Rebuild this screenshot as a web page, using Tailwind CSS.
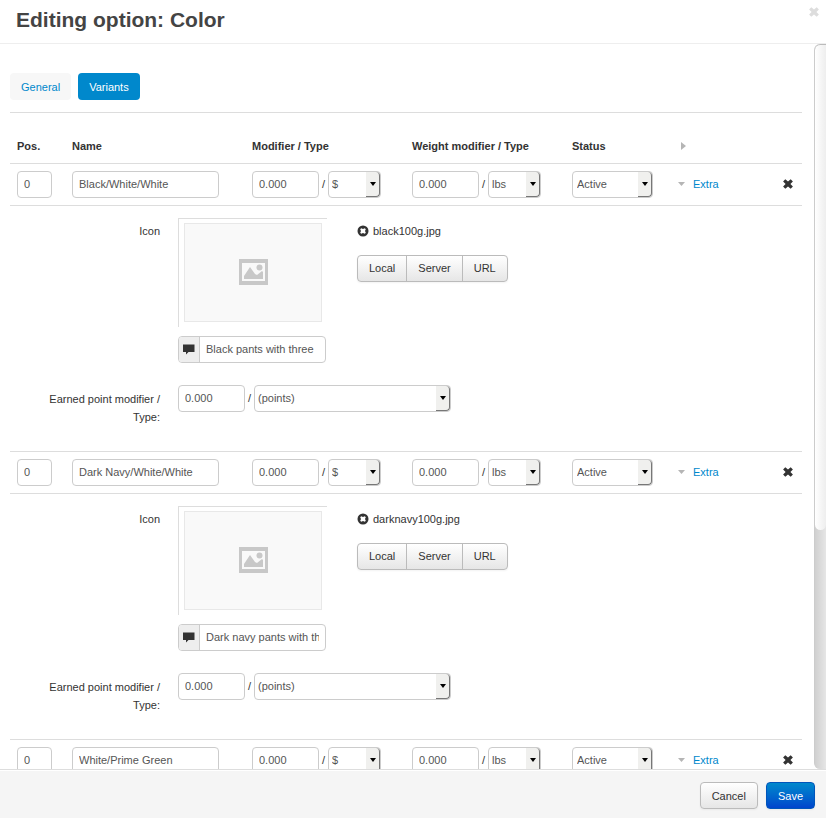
<!DOCTYPE html>
<html lang="en">
<head>
<meta charset="utf-8">
<title>Editing option: Color</title>
<script src="https://cdn.jsdelivr.net/npm/@tailwindcss/browser@4"></script>
</head>
<body class="flex h-screen flex-col overflow-hidden bg-white font-['Liberation_Sans',Arial,sans-serif] text-[11px] leading-[18px] text-[#333]">

<svg class="hidden" aria-hidden="true">
  <symbol id="cross" viewBox="0 0 10 10"><path fill="currentColor" d="M2.3 0.3 5 2.6 7.7 0.3 9.9 2.5 7.4 5 9.9 7.5 7.7 9.7 5 7.4 2.3 9.7 0.1 7.5 2.6 5 0.1 2.5z"/></symbol>
  <symbol id="picture" viewBox="0 0 29 26"><path fill="#c8c8c8" fill-rule="evenodd" d="M0 0h29v26H0zM3 4v18h23V4z"/><path fill="#c8c8c8" d="M5 20v-3l6-9 5 7 2 1 5-4 1 1v7z"/><circle cx="20.500" cy="8.500" r="3" fill="#c8c8c8"/></symbol>
  <symbol id="comment" viewBox="0 0 12 11"><path fill="#333" d="M0 .5h11.500v7.500H5.500L3 10.500V8H0z"/></symbol>
  <symbol id="remove" viewBox="0 0 12 12"><circle cx="6" cy="6" r="5.500" fill="#333"/><path fill="#fff" d="M4.200 3.200 6 4 7.800 3.200 8.800 4.200 8 6 8.800 7.800 7.800 8.800 6 8 4.200 8.800 3.200 7.800 4 6 3.200 4.200z"/></symbol>
  <symbol id="down" viewBox="0 0 6 4"><path fill="#000" d="M0 0h6L3 4z"/></symbol>
</svg>

<header class="flex h-11 shrink-0 items-start justify-between border-b border-[#eee] pl-4 pr-[7px]">
  <h1 class="pt-1 text-[21px] font-bold leading-8 text-[#444]">Editing option: Color</h1>
  <button type="button" aria-label="Close" class="mt-[7px] text-[#ddd]"><svg class="size-[10px]"><use href="#cross"/></svg></button>
</header>

<div class="flex min-h-0 flex-1">
  <main class="min-w-0 flex-1 overflow-y-auto pl-[10px] pr-3 pt-[29px] [scrollbar-width:none]">
    <nav class="flex gap-[7px] border-b border-[#ddd] pb-3">
      <a href="#general" class="rounded bg-[#f7f7f7] px-[11px] pb-1 pt-[5px] text-[#08c]">General</a>
      <a href="#variants" class="rounded bg-[#08c] px-[11px] pb-1 pt-[5px] text-white">Variants</a>
    </nav>

    <table class="mt-4 w-full table-fixed border-collapse">
      <colgroup><col class="w-[55px]"><col class="w-[180px]"><col class="w-[160px]"><col class="w-[160px]"><col class="w-[105px]"><col><col class="w-9"></colgroup>
      <thead>
        <tr class="h-[34px] text-left text-[#333]">
          <th class="px-[7px]">Pos.</th><th class="px-[7px]">Name</th><th class="px-[7px]">Modifier / Type</th><th class="px-[7px]">Weight modifier / Type</th><th class="px-[7px]">Status</th>
          <th class="pl-[11px]"><button type="button" aria-label="Expand all" class="block"><svg class="h-2 w-[5px]" viewBox="0 0 5 8"><path fill="#b5b5b5" d="M0 0 5 4 0 8z"/></svg></button></th><th></th>
        </tr>
      </thead>
      <tbody id="variants"></tbody>
    </table>
  </main>
  <div class="w-3 shrink-0 overflow-hidden rounded-l-md border-l border-[#ccc] bg-linear-to-r from-[#d0d0d0] to-[#e6e6e6]" aria-hidden="true">
    <div class="h-[67%] w-full rounded-l-md rounded-b-md border-t border-[#bbb] bg-linear-to-r from-white to-[#eee]"></div>
  </div>
</div>

<footer class="flex shrink-0 justify-end gap-2 border-t border-[#ddd] bg-[#f5f5f5] pb-[9px] pr-[11px] pt-3 shadow-[inset_0_1px_0_#fff]">
  <button type="button" class="h-[27px] rounded border border-[#bbb] bg-linear-to-b from-white to-[#e6e6e6] px-[11px] shadow-xs">Cancel</button>
  <button type="button" class="h-[27px] rounded border border-[#0055bb] bg-linear-to-b from-[#08c] to-[#04c] px-[11px] text-white shadow-xs">Save</button>
</footer>

<template id="variant">
  <tr class="h-[42px] border-t border-[#ddd]">
    <td class="px-[7px]"><input aria-label="Position" value="0" class="block h-[27px] w-[35px] rounded border border-[#ccc] px-[6px] text-[#555]"></td>
    <td class="px-[7px]"><input data-name aria-label="Name" class="block h-[27px] w-[147px] rounded border border-[#ccc] px-[6px] text-[#555]"></td>
    <td class="px-[7px]"><div class="flex items-center">
      <input aria-label="Modifier" value="0.000" class="h-[27px] w-[67px] rounded border border-[#ccc] px-[6px] text-[#555]">
      <span class="w-[9px] text-center">/</span>
      <span class="relative w-[53px]"><select aria-label="Modifier type" class="block h-[27px] w-full appearance-none rounded border border-[#ccc] bg-white pl-[3px] text-[#555]"><option>$</option><option>%</option></select><span class="pointer-events-none absolute inset-y-px right-px flex w-[14px] items-center justify-center rounded-r-sm border-b border-r border-[#777] bg-[#f0f0ee]"><svg class="h-1 w-[6px]"><use href="#down"/></svg></span></span>
    </div></td>
    <td class="px-[7px]"><div class="flex items-center">
      <input aria-label="Weight modifier" value="0.000" class="h-[27px] w-[67px] rounded border border-[#ccc] px-[6px] text-[#555]">
      <span class="w-[9px] text-center">/</span>
      <span class="relative w-[53px]"><select aria-label="Weight modifier type" class="block h-[27px] w-full appearance-none rounded border border-[#ccc] bg-white pl-[3px] text-[#555]"><option>lbs</option><option>%</option></select><span class="pointer-events-none absolute inset-y-px right-px flex w-[14px] items-center justify-center rounded-r-sm border-b border-r border-[#777] bg-[#f0f0ee]"><svg class="h-1 w-[6px]"><use href="#down"/></svg></span></span>
    </div></td>
    <td class="px-[7px]"><span class="relative block w-[81px]"><select aria-label="Status" class="block h-[27px] w-full appearance-none rounded border border-[#ccc] bg-white pl-1 text-[#555]"><option>Active</option><option>Disabled</option></select><span class="pointer-events-none absolute inset-y-px right-px flex w-[14px] items-center justify-center rounded-r-sm border-b border-r border-[#777] bg-[#f0f0ee]"><svg class="h-1 w-[6px]"><use href="#down"/></svg></span></span></td>
    <td class="pl-2"><a href="#extra" class="flex items-center gap-2 text-[#08c]"><svg class="h-1 w-[7px]" viewBox="0 0 7 4"><path fill="#b5b5b5" d="M0 0h7L3.500 4z"/></svg>Extra</a></td>
    <td class="pl-[17px]"><button type="button" aria-label="Remove variant" class="block"><svg class="size-[10px]"><use href="#cross"/></svg></button></td>
  </tr>
  <tr class="border-t border-[#ddd]">
    <td colspan="7" class="h-[246px] align-top">
      <div class="flex items-start pt-3">
        <span class="mt-1 w-[150px] text-right">Icon</span>
        <div class="ml-[18px] w-[149px]">
          <div class="h-[109px] border-l border-t border-[#ddd] pb-[5px] pl-[5px] pr-[5px] pt-1">
            <div class="flex h-full items-center justify-center border border-[#e8e8e8] bg-[#f9f9f9]"><svg class="h-[26px] w-[29px]"><use href="#picture"/></svg></div>
          </div>
          <label class="mt-[9px] flex h-[27px] w-[148px] overflow-hidden rounded border border-[#ccc]">
            <span class="flex w-[21px] shrink-0 items-center justify-center border-r border-[#ccc] bg-[#eee]"><svg class="h-[11px] w-3"><use href="#comment"/></svg></span>
            <input data-alt aria-label="Alternative text" class="min-w-0 flex-1 px-[6px] text-[#555]">
          </label>
        </div>
        <div class="ml-[30px] mt-1">
          <div class="flex items-center gap-1"><button type="button" aria-label="Remove image"><svg class="size-3"><use href="#remove"/></svg></button><span data-file></span></div>
          <div class="mt-[15px] flex h-[27px] w-fit divide-x divide-[#bbb] overflow-hidden rounded border border-[#bbb] bg-linear-to-b from-white to-[#e6e6e6] shadow-xs">
            <button type="button" class="px-[11px]">Local</button><button type="button" class="px-[11px]">Server</button><button type="button" class="px-[11px]">URL</button>
          </div>
        </div>
      </div>
      <div class="mt-[22px] flex items-start">
        <span class="mt-[5px] w-[150px] pl-6 text-right">Earned point modifier / Type:</span>
        <div class="ml-[18px] flex items-center">
          <input aria-label="Earned point modifier" value="0.000" class="h-[27px] w-[67px] rounded border border-[#ccc] px-[6px] text-[#555]">
          <span class="w-[9px] text-center">/</span>
          <span class="relative w-[197px]"><select aria-label="Earned point type" class="block h-[27px] w-full appearance-none rounded border border-[#ccc] bg-white pl-[3px] text-[#555]"><option>(points)</option></select><span class="pointer-events-none absolute inset-y-px right-px flex w-[14px] items-center justify-center rounded-r-sm border-b border-r border-[#777] bg-[#f0f0ee]"><svg class="h-1 w-[6px]"><use href="#down"/></svg></span></span>
        </div>
      </div>
    </td>
  </tr>
</template>

<script>
  const variants = [
    { name: "Black/White/White", file: "black100g.jpg", alt: "Black pants with three" },
    { name: "Dark Navy/White/White", file: "darknavy100g.jpg", alt: "Dark navy pants with three" },
    { name: "White/Prime Green" }
  ];
  const body = document.getElementById("variants");
  for (const { name, file, alt } of variants) {
    const row = document.getElementById("variant").content.cloneNode(true);
    row.querySelector("[data-name]").value = name;
    if (file) {
      row.querySelector("[data-file]").textContent = file;
      row.querySelector("[data-alt]").value = alt;
    } else {
      row.lastElementChild.remove();
    }
    body.append(row);
  }
</script>
</body>
</html>
